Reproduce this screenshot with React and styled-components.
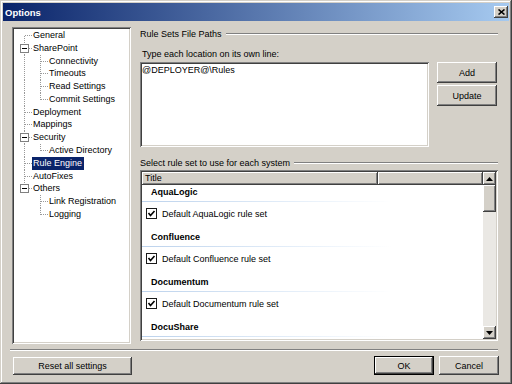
import React from 'react';
import styled, { createGlobalStyle, css } from 'styled-components';

const GlobalStyle = createGlobalStyle`
  html, body { margin: 0; padding: 0; background: #D4D0C8; }
  body {
    font-family: "Liberation Sans", Arial, sans-serif;
    font-size: 9px;
    color: #000;
  }
  * { box-sizing: border-box; }
`;

const raised = css`
  box-shadow: inset -1px -1px #404040, inset 1px 1px #fff, inset -2px -2px #808080, inset 2px 2px #D4D0C8;
`;

const sunken = css`
  box-shadow: inset 1px 1px #808080, inset -1px -1px #fff, inset 2px 2px #404040, inset -2px -2px #D4D0C8;
`;

const Window = styled.div`
  width: 512px;
  height: 384px;
  padding: 3px;
  display: flex;
  flex-direction: column;
  background: #D4D0C8;
  box-shadow: inset -1px -1px #404040, inset 1px 1px #D4D0C8, inset -2px -2px #808080, inset 2px 2px #fff;
`;

const TitleBar = styled.div`
  height: 18px;
  flex: none;
  display: flex;
  align-items: center;
  justify-content: space-between;
  padding: 0 1px 0 2px;
  background: linear-gradient(to right, #0A246A, #A6CAF0);
`;

const Title = styled.span`
  color: #fff;
  font-weight: bold;
  font-size: 9.5px;
`;

const CloseButton = styled.div`
  width: 14px;
  height: 12px;
  display: flex;
  align-items: center;
  justify-content: center;
  background: #D4D0C8;
  ${raised}
`;

const Body = styled.div`
  flex: 1;
  min-height: 0;
  display: flex;
  flex-direction: column;
  padding: 6px 9px 6px 9px;
`;

const Main = styled.div`
  height: 317px;
  flex: none;
  display: flex;
  gap: 9px;
`;

const TreePanel = styled.div`
  width: 119px;
  background: #fff;
  padding: 2px 0 0 4px;
  ${sunken}
`;

const TreeRow = styled.div`
  height: 12.8px;
  display: flex;
  align-items: center;
  white-space: nowrap;
`;

const TreeLabel = styled.span`
  padding: 1px 2px 1px 1px;
  line-height: 11px;
  ${(p) => p.$selected && css`
    background: #0A246A;
    color: #fff;
  `}
`;

const RightPane = styled.div`
  flex: 1;
  min-height: 0;
  display: flex;
  flex-direction: column;
  padding-bottom: 3px;
  & > * { flex-shrink: 0; }
`;

const GroupHeader = styled.div`
  display: flex;
  align-items: center;
  gap: 4px;
  height: 13px;
  margin-right: 2px;
  margin-top: ${(p) => p.$top || 0}px;
`;

const Etched = styled.div`
  flex: 1;
  height: 2px;
  border-top: 1px solid #808080;
  border-bottom: 1px solid #fff;
`;

const FieldLabel = styled.div`
  margin: 8px 0 0 2px;
  line-height: 13px;
  height: 13px;
`;

const EditRow = styled.div`
  display: flex;
  gap: 8px;
  margin-top: 1px;
`;

const TextBox = styled.div`
  width: 289px;
  height: 85px;
  padding: 2px 2px;
  background: #fff;
  line-height: 12px;
  ${sunken}
`;

const ButtonColumn = styled.div`
  display: flex;
  flex-direction: column;
  gap: 2px;
`;

const Button = styled.button`
  font: inherit;
  color: #000;
  width: ${(p) => p.$width || 60}px;
  height: ${(p) => p.$height || 21}px;
  flex: none;
  border: none;
  padding: 0;
  background: #D4D0C8;
  ${raised}
  ${(p) => p.$default && css`
    box-shadow: inset 0 0 0 1px #000, inset -2px -2px #404040, inset 2px 2px #fff, inset -3px -3px #808080;
  `}
`;

const ListView = styled.div`
  && {
    flex: 1 1 0;
    min-height: 0;
  }
  margin: 1px 2px 0 0;
  padding: 2px;
  display: flex;
  background: #fff;
  ${sunken}
`;

const ListContent = styled.div`
  flex: 1;
  display: flex;
  flex-direction: column;
  min-width: 0;
  min-height: 0;
`;

const ColumnHeaders = styled.div`
  display: flex;
  height: 13px;
  flex: none;
`;

const ColumnHeader = styled.div`
  width: ${(p) => (p.$width ? `${p.$width}px` : 'auto')};
  flex: ${(p) => (p.$width ? 'none' : 1)};
  padding-left: 3px;
  line-height: 13px;
  background: #D4D0C8;
  box-shadow: inset -1px -1px #404040, inset 1px 1px #fff, inset -2px -2px #808080;
`;

const ListBody = styled.div`
  flex: 1 1 0;
  min-height: 0;
  overflow: hidden;
  background: #fff;
`;

const Scrolled = styled.div`
  margin-top: -5px;
`;

const GroupRow = styled.div`
  height: 22px;
  padding: 2px 0 0 9px;
  display: flex;
  align-items: center;
  font-weight: bold;
  background: linear-gradient(to right, #BCD2EC, #E4EEF9 60%, #fff) left bottom / 250px 1px no-repeat;
`;

const ItemRow = styled.div`
  height: 23px;
  padding-left: 4px;
  display: flex;
  align-items: center;
  gap: 5px;
`;

const ScrollBar = styled.div`
  width: 13px;
  flex: none;
  display: flex;
  flex-direction: column;
  background: #EAE8E4;
`;

const ScrollButton = styled.div`
  height: 13px;
  flex: none;
  display: flex;
  align-items: center;
  justify-content: center;
  background: #D4D0C8;
  ${raised}
`;

const Thumb = styled.div`
  height: 27px;
  flex: none;
  background: #D4D0C8;
  ${raised}
`;

const Track = styled.div`
  flex: 1;
`;

const Separator = styled.div`
  height: 2px;
  flex: none;
  margin: 5px 2px 5px -2px;
  border-top: 1px solid #808080;
  border-bottom: 1px solid #fff;
`;

const Footer = styled.div`
  height: 19px;
  flex: none;
  display: flex;
  align-items: center;
  gap: 5px;
  padding: 0 1px;
`;

const Spacer = styled.div`
  flex: 1;
`;

const tree = [
  { label: 'General' },
  {
    label: 'SharePoint',
    children: ['Connectivity', 'Timeouts', 'Read Settings', 'Commit Settings'],
  },
  { label: 'Deployment' },
  { label: 'Mappings' },
  { label: 'Security', children: ['Active Directory'] },
  { label: 'Rule Engine', selected: true },
  { label: 'AutoFixes' },
  { label: 'Others', children: ['Link Registration', 'Logging'] },
];

// visible part of the list: the last group's rule set is scrolled out of view
const systems = [
  { name: 'AquaLogic', rules: ['Default AquaLogic rule set'] },
  { name: 'Confluence', rules: ['Default Confluence rule set'] },
  { name: 'Documentum', rules: ['Default Documentum rule set'] },
  { name: 'DocuShare', rules: [] },
];

const DOT = { stroke: '#999', strokeWidth: 1, strokeDasharray: '1 1' };

// one 16px column of tree guide lines
const Guide = ({ kind, expander }) => (
  <svg width="16" height="13" style={{ flex: 'none', overflow: 'visible' }}>
    {(kind === 'pipe' || kind === 'tee') && (
      <line x1="8.5" y1="0" x2="8.5" y2="13" {...DOT} />
    )}
    {kind === 'ell' && <line x1="8.5" y1="0" x2="8.5" y2="7" {...DOT} />}
    {kind === 'first' && <line x1="8.5" y1="7" x2="8.5" y2="13" {...DOT} />}
    {kind !== 'pipe' && kind !== 'blank' && (
      <line x1="9" y1="6.5" x2="16" y2="6.5" {...DOT} />
    )}
    {expander && (
      <g>
        <rect x="4.5" y="2.5" width="8" height="8" fill="#fff" stroke="#808080" />
        <line x1="6" y1="6.5" x2="11" y2="6.5" stroke="#000" />
      </g>
    )}
  </svg>
);

const CheckBox = () => (
  <svg width="11" height="11" style={{ flex: 'none' }}>
    <rect x="0.5" y="0.5" width="10" height="10" fill="#fff" stroke="#1A1A1A" />
    <polyline points="2.5,5 4.5,7.5 8.5,3" fill="none" stroke="#000" strokeWidth="1.6" />
  </svg>
);

const Arrow = ({ down }) => (
  <svg width="7" height="4">
    <polygon points={down ? '0,0 7,0 3.5,4' : '0,4 7,4 3.5,0'} fill="#000" />
  </svg>
);

function TreeView() {
  const rows = [];
  tree.forEach((node, i) => {
    const last = i === tree.length - 1;
    const kind = i === 0 ? 'first' : last ? 'ell' : 'tee';
    rows.push(
      <TreeRow key={node.label}>
        <Guide kind={kind} expander={!!node.children} />
        <TreeLabel $selected={node.selected}>{node.label}</TreeLabel>
      </TreeRow>
    );
    (node.children || []).forEach((child, j) => {
      const lastChild = j === node.children.length - 1;
      rows.push(
        <TreeRow key={child}>
          <Guide kind={last ? 'blank' : 'pipe'} />
          <Guide kind={lastChild ? 'ell' : 'tee'} />
          <TreeLabel>{child}</TreeLabel>
        </TreeRow>
      );
    });
  });
  return <TreePanel>{rows}</TreePanel>;
}

export default function App() {
  return (
    <>
      <GlobalStyle />
      <Window>
        <TitleBar>
          <Title>Options</Title>
          <CloseButton>
            <svg width="7" height="6">
              <path d="M0.5 0.5 L6.5 5.5 M6.5 0.5 L0.5 5.5" stroke="#000" strokeWidth="1.6" />
            </svg>
          </CloseButton>
        </TitleBar>
        <Body>
          <Main>
            <TreeView />
            <RightPane>
              <GroupHeader>
                <span>Rule Sets File Paths</span>
                <Etched />
              </GroupHeader>
              <FieldLabel>Type each location on its own line:</FieldLabel>
              <EditRow>
                <TextBox>@DEPLOYER@\Rules</TextBox>
                <ButtonColumn>
                  <Button>Add</Button>
                  <Button>Update</Button>
                </ButtonColumn>
              </EditRow>
              <GroupHeader $top={9}>
                <span>Select rule set to use for each system</span>
                <Etched />
              </GroupHeader>
              <ListView>
                <ListContent>
                  <ColumnHeaders>
                    <ColumnHeader $width={236}>Title</ColumnHeader>
                    <ColumnHeader />
                  </ColumnHeaders>
                  <ListBody>
                    <Scrolled>
                      {systems.map((s) => (
                        <React.Fragment key={s.name}>
                          <GroupRow>{s.name}</GroupRow>
                          {s.rules.map((r) => (
                            <ItemRow key={r}>
                              <CheckBox />
                              <span>{r}</span>
                            </ItemRow>
                          ))}
                        </React.Fragment>
                      ))}
                    </Scrolled>
                  </ListBody>
                </ListContent>
                <ScrollBar>
                  <ScrollButton>
                    <Arrow />
                  </ScrollButton>
                  <Thumb />
                  <Track />
                  <ScrollButton>
                    <Arrow down />
                  </ScrollButton>
                </ScrollBar>
              </ListView>
            </RightPane>
          </Main>
          <Separator />
          <Footer>
            <Button $width={119} $height={18}>Reset all settings</Button>
            <Spacer />
            <Button $width={60} $height={19} $default>OK</Button>
            <Button $width={60} $height={19}>Cancel</Button>
          </Footer>
        </Body>
      </Window>
    </>
  );
}
